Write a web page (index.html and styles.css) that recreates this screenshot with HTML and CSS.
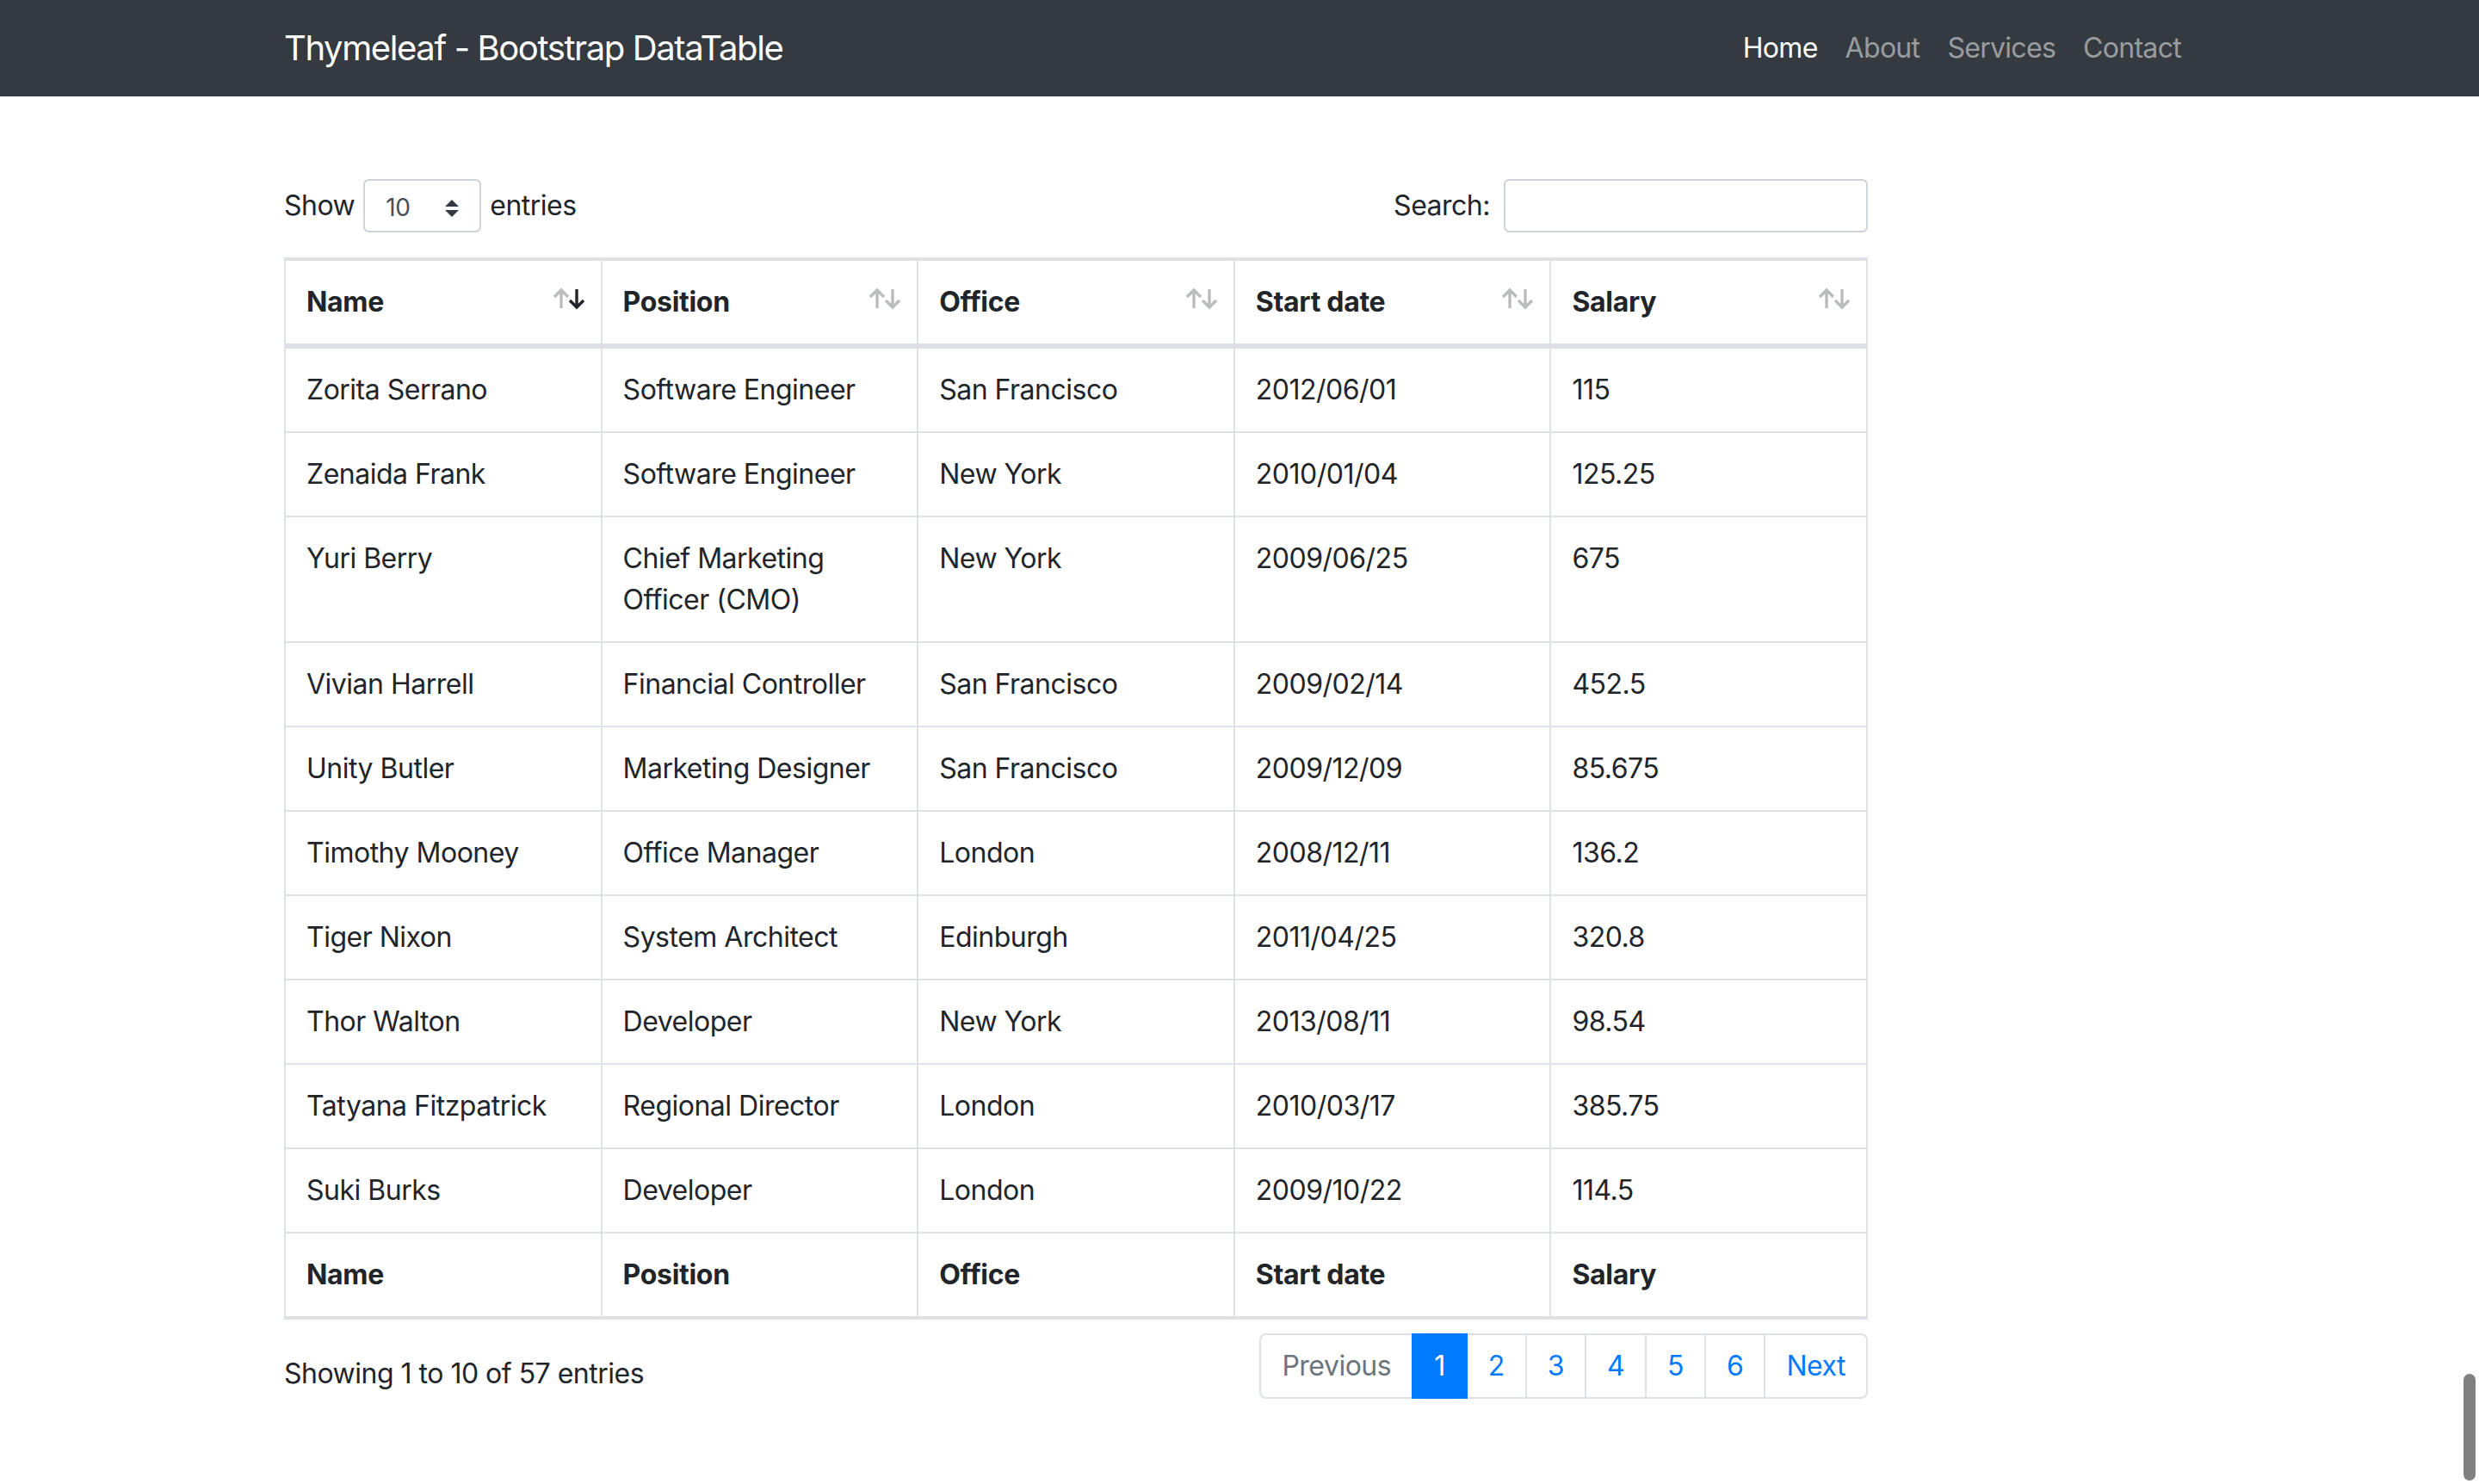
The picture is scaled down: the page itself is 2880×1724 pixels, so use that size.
FILE: index.html
```
<!DOCTYPE html>
<html lang="en">
<head>
<meta charset="utf-8">
<title>Thymeleaf - Bootstrap DataTable</title>
<link rel="stylesheet" href="styles.css">
</head>
<body>
<nav class="navbar">
  <div class="nav-container">
    <a class="brand" href="#">Thymeleaf - Bootstrap DataTable</a>
    <ul class="nav-links">
      <li><a class="nav-link active" href="#">Home</a></li>
      <li><a class="nav-link" href="#">About</a></li>
      <li><a class="nav-link" href="#">Services</a></li>
      <li><a class="nav-link" href="#">Contact</a></li>
    </ul>
  </div>
</nav>

<main class="main-container">
  <div class="dt-wrapper">
    <div class="dt-top">
      <label class="dt-length">Show
        <span class="fake-select"><span class="fake-select-value">10</span>
          <svg class="select-arrow" width="16" height="20" viewBox="0 0 4 5"><path fill="#343a40" d="M2 0L0 2h4zm0 5L0 3h4z"/></svg>
        </span>
        entries</label>
      <label class="dt-filter">Search:<input class="search-input" type="search"></label>
    </div>

    <table class="data-table">
      <thead>
        <tr>
          <th class="sortable sorted-desc">Name<span class="arrow arrow-up"><svg width="22" height="26" viewBox="0 0 22 26"><path d="M11 24V3M3 11l8-8 8 8" fill="none" stroke="currentColor" stroke-width="3.4"/></svg></span><span class="arrow arrow-down"><svg width="22" height="26" viewBox="0 0 22 26"><path d="M11 2v21M3 15l8 8 8-8" fill="none" stroke="currentColor" stroke-width="3.4"/></svg></span></th>
          <th class="sortable">Position<span class="arrow arrow-up"><svg width="22" height="26" viewBox="0 0 22 26"><path d="M11 24V3M3 11l8-8 8 8" fill="none" stroke="currentColor" stroke-width="3.4"/></svg></span><span class="arrow arrow-down"><svg width="22" height="26" viewBox="0 0 22 26"><path d="M11 2v21M3 15l8 8 8-8" fill="none" stroke="currentColor" stroke-width="3.4"/></svg></span></th>
          <th class="sortable">Office<span class="arrow arrow-up"><svg width="22" height="26" viewBox="0 0 22 26"><path d="M11 24V3M3 11l8-8 8 8" fill="none" stroke="currentColor" stroke-width="3.4"/></svg></span><span class="arrow arrow-down"><svg width="22" height="26" viewBox="0 0 22 26"><path d="M11 2v21M3 15l8 8 8-8" fill="none" stroke="currentColor" stroke-width="3.4"/></svg></span></th>
          <th class="sortable">Start date<span class="arrow arrow-up"><svg width="22" height="26" viewBox="0 0 22 26"><path d="M11 24V3M3 11l8-8 8 8" fill="none" stroke="currentColor" stroke-width="3.4"/></svg></span><span class="arrow arrow-down"><svg width="22" height="26" viewBox="0 0 22 26"><path d="M11 2v21M3 15l8 8 8-8" fill="none" stroke="currentColor" stroke-width="3.4"/></svg></span></th>
          <th class="sortable">Salary<span class="arrow arrow-up"><svg width="22" height="26" viewBox="0 0 22 26"><path d="M11 24V3M3 11l8-8 8 8" fill="none" stroke="currentColor" stroke-width="3.4"/></svg></span><span class="arrow arrow-down"><svg width="22" height="26" viewBox="0 0 22 26"><path d="M11 2v21M3 15l8 8 8-8" fill="none" stroke="currentColor" stroke-width="3.4"/></svg></span></th>
        </tr>
      </thead>
      <tbody>
        <tr><td>Zorita Serrano</td><td>Software Engineer</td><td>San Francisco</td><td>2012/06/01</td><td>115</td></tr>
        <tr><td>Zenaida Frank</td><td>Software Engineer</td><td>New York</td><td>2010/01/04</td><td>125.25</td></tr>
        <tr><td>Yuri Berry</td><td>Chief Marketing Officer (CMO)</td><td>New York</td><td>2009/06/25</td><td>675</td></tr>
        <tr><td>Vivian Harrell</td><td>Financial Controller</td><td>San Francisco</td><td>2009/02/14</td><td>452.5</td></tr>
        <tr><td>Unity Butler</td><td>Marketing Designer</td><td>San Francisco</td><td>2009/12/09</td><td>85.675</td></tr>
        <tr><td>Timothy Mooney</td><td>Office Manager</td><td>London</td><td>2008/12/11</td><td>136.2</td></tr>
        <tr><td>Tiger Nixon</td><td>System Architect</td><td>Edinburgh</td><td>2011/04/25</td><td>320.8</td></tr>
        <tr><td>Thor Walton</td><td>Developer</td><td>New York</td><td>2013/08/11</td><td>98.54</td></tr>
        <tr><td>Tatyana Fitzpatrick</td><td>Regional Director</td><td>London</td><td>2010/03/17</td><td>385.75</td></tr>
        <tr><td>Suki Burks</td><td>Developer</td><td>London</td><td>2009/10/22</td><td>114.5</td></tr>
      </tbody>
      <tfoot>
        <tr><th>Name</th><th>Position</th><th>Office</th><th>Start date</th><th>Salary</th></tr>
      </tfoot>
    </table>

    <div class="dt-bottom">
      <div class="dt-info">Showing 1 to 10 of 57 entries</div>
      <ul class="pagination">
        <li class="page-item disabled"><a class="page-link" href="#">Previous</a></li>
        <li class="page-item active"><a class="page-link" href="#">1</a></li>
        <li class="page-item"><a class="page-link" href="#">2</a></li>
        <li class="page-item"><a class="page-link" href="#">3</a></li>
        <li class="page-item"><a class="page-link" href="#">4</a></li>
        <li class="page-item"><a class="page-link" href="#">5</a></li>
        <li class="page-item"><a class="page-link" href="#">6</a></li>
        <li class="page-item"><a class="page-link" href="#">Next</a></li>
      </ul>
    </div>
  </div>
</main>
<div class="scroll-thumb"></div>
</body>
</html>
```
FILE: styles.css
```
* { box-sizing: border-box; }
html, body { margin: 0; padding: 0; }
body {
  font-family: Inter, "Noto Sans", sans-serif;
  font-size: 32px;
  line-height: 1.5;
  letter-spacing: -0.5px;
  color: #212529;
  background: #fff;
  overflow: hidden;
}
a { text-decoration: none; }

.navbar {
  background: #343a40;
  padding: 16px 32px;
}
.nav-container {
  width: 2280px;
  margin: 0 auto;
  padding: 0 30px;
  display: flex;
  align-items: center;
  justify-content: space-between;
}
.brand {
  color: #fff;
  font-size: 40px;
  line-height: 60px;
  padding: 10px 0;
  letter-spacing: -1.4px;
}
.nav-links {
  list-style: none;
  margin: 0;
  padding: 0;
  display: flex;
}
.nav-link {
  display: block;
  padding: 16px 16px;
  color: rgba(255,255,255,.5);
  letter-spacing: -0.7px;
}
.nav-link.active { color: #fff; }

.main-container {
  width: 2280px;
  margin: 96px auto 0;
  padding: 0 30px;
}
.dt-wrapper { width: 1840px; }

.dt-top {
  display: flex;
  justify-content: space-between;
  align-items: center;
  padding-bottom: 17px;
}
.dt-length, .dt-filter {
  display: flex;
  align-items: center;
  white-space: nowrap;
}
.fake-select {
  display: flex;
  align-items: center;
  justify-content: space-between;
  width: 137px;
  height: 62px;
  margin: 0 10px;
  padding: 0 24px;
  border: 2px solid #ced4da;
  border-radius: 6.4px;
  font-size: 28px;
  color: #495057;
}
.fake-select-value { line-height: 1; padding-top: 3px; }
.select-arrow { display: block; margin-top: 6px; }
.search-input {
  width: 423px;
  height: 62px;
  margin-left: 16px;
  border: 2px solid #ced4da;
  border-radius: 6.4px;
  font: inherit;
  font-size: 28px;
  padding: 8px 16px;
  outline: none;
}

.data-table {
  width: 100%;
  margin: 12px 0;
  border-collapse: separate;
  border-spacing: 0;
  table-layout: fixed;
  border: 2px solid #dee2e6;
  border-right-width: 0;
}
.data-table th, .data-table td {
  padding: 24px;
  border: 2px solid #dee2e6;
  border-left-width: 0;
  text-align: left;
  vertical-align: top;
}
.data-table th { font-weight: 700; letter-spacing: -0.3px; }
.data-table thead th {
  vertical-align: bottom;
  border-bottom-width: 4px;
  position: relative;
  padding-right: 60px;
}
.data-table tbody td { border-bottom-width: 0; }

.arrow {
  position: absolute;
  bottom: 28px;
  height: 48px;
  display: flex;
  align-items: center;
  color: #212529;
  opacity: .3;
}
.arrow svg { display: block; }
.arrow-up { right: 35px; }
.arrow-down { right: 17px; }
.sorted-desc .arrow-down { opacity: 1; }

.dt-bottom {
  display: flex;
  justify-content: space-between;
  align-items: flex-start;
}
.dt-info {
  padding-top: 27px;
  white-space: nowrap;
}
.pagination {
  list-style: none;
  display: flex;
  margin: 4px 0;
  padding: 0;
}
.page-link {
  display: block;
  position: relative;
  padding: 16px 24px;
  margin-left: -2px;
  line-height: 40px;
  color: #007bff;
  background: #fff;
  border: 2px solid #dee2e6;
}
.page-item:first-child .page-link {
  margin-left: 0;
  border-radius: 8px 0 0 8px;
}
.page-item:last-child .page-link { border-radius: 0 8px 8px 0; }
.page-item.active .page-link {
  z-index: 3;
  color: #fff;
  background: #007bff;
  border-color: #007bff;
}
.page-item.disabled .page-link { color: #6c757d; }

.scroll-thumb {
  position: fixed;
  right: 4px;
  bottom: 4px;
  width: 14px;
  height: 124px;
  background: #808080;
  border-radius: 7px;
}
```
